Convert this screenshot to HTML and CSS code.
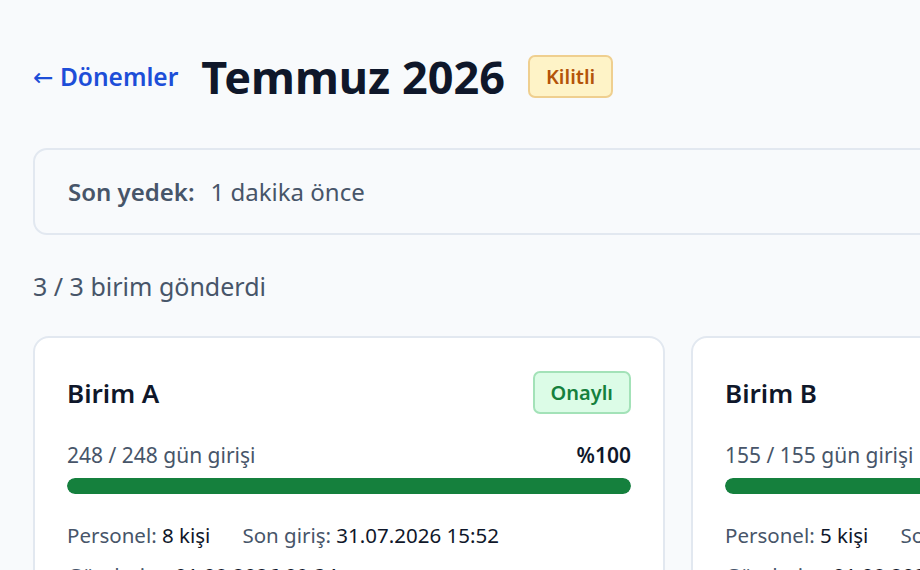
FILE: index.html
```html
<!DOCTYPE html>
<html lang="tr">
<head>
    <meta charset="UTF-8">
    <meta name="viewport" content="width=device-width, initial-scale=1.0">
    <title>Temmuz 2026</title>
    <link rel="stylesheet" href="styles.css">
</head>
<body>
    <div class="page">
        <div class="header">
            <a class="backLink" href="#"><span class="arrow">&larr;</span> Dönemler</a>
            <h1 class="title">Temmuz 2026</h1>
            <span class="badge badgeLocked">Kilitli</span>
        </div>

        <div class="backup">
            <span class="backupLabel">Son yedek:</span>
            <span class="backupValue">1 dakika önce</span>
        </div>

        <p class="summary">3 / 3 birim gönderdi</p>

        <div class="cards">
            <div class="card">
                <div class="cardHead">
                    <h2 class="cardTitle">Birim A</h2>
                    <span class="badge badgeOk">Onaylı</span>
                </div>
                <div class="progressInfo">
                    <span>248 / 248 gün girişi</span>
                    <span class="percent">%100</span>
                </div>
                <div class="track"><div class="fill" style="width: 100%"></div></div>
                <div class="meta">
                    <span><span class="metaLabel">Personel:</span> 8 kişi</span>
                    <span><span class="metaLabel">Son giriş:</span> 31.07.2026 15:52</span>
                </div>
                <div class="meta">
                    <span><span class="metaLabel">Gönderim:</span> 01.08.2026 09:34</span>
                </div>
            </div>
            <div class="card">
                <div class="cardHead">
                    <h2 class="cardTitle">Birim B</h2>
                    <span class="badge badgeOk">Onaylı</span>
                </div>
                <div class="progressInfo">
                    <span>155 / 155 gün girişi</span>
                    <span class="percent">%100</span>
                </div>
                <div class="track"><div class="fill" style="width: 100%"></div></div>
                <div class="meta">
                    <span><span class="metaLabel">Personel:</span> 5 kişi</span>
                    <span><span class="metaLabel">Son giriş:</span> 31.07.2026 14:10</span>
                </div>
                <div class="meta">
                    <span><span class="metaLabel">Gönderim:</span> 01.08.2026 09:21</span>
                </div>
            </div>
            <div class="card">
                <div class="cardHead">
                    <h2 class="cardTitle">Birim C</h2>
                    <span class="badge badgeOk">Onaylı</span>
                </div>
                <div class="progressInfo">
                    <span>186 / 186 gün girişi</span>
                    <span class="percent">%100</span>
                </div>
                <div class="track"><div class="fill" style="width: 100%"></div></div>
                <div class="meta">
                    <span><span class="metaLabel">Personel:</span> 6 kişi</span>
                    <span><span class="metaLabel">Son giriş:</span> 31.07.2026 16:05</span>
                </div>
                <div class="meta">
                    <span><span class="metaLabel">Gönderim:</span> 01.08.2026 10:02</span>
                </div>
            </div>
        </div>
    </div>
</body>
</html>
```

FILE: styles.css
```css
*{margin:0;padding:0;box-sizing:border-box;}
html{overflow:hidden;}
body{background:#f8fafc;font-family:"Noto Sans","Open Sans",sans-serif;color:#0f172a;}
.page{width:1981px;padding:46px 0 40px 33px;}

.header{display:flex;align-items:center;gap:23px;}
.backLink{color:#1d4ed8;text-decoration:none;font-size:24.5px;font-weight:600;}
.arrow{font-family:"DejaVu Sans",sans-serif;font-weight:400;}
.title{font-size:45px;font-weight:700;color:#0f172a;}
.badge{display:inline-block;border:2px solid;border-radius:7px;font-weight:600;font-size:20px;padding:6px 16px;}
.badgeLocked{background:#fef3c7;border-color:#efcf8f;color:#b45309;}
.badgeOk{background:#dcfce7;border-color:#a3e2b8;color:#15803d;}

.backup{margin-top:41px;height:87px;border:2px solid #e2e8f0;border-radius:14px;display:flex;align-items:center;gap:16px;padding:0 33px;font-size:24px;color:#475569;}
.backupLabel{font-weight:600;}

.summary{margin-top:34px;font-size:25px;color:#475569;}

.cards{margin-top:33px;display:grid;grid-template-columns:repeat(3,632px);gap:26px;}
.card{background:#fff;border:2px solid #e2e8f0;border-radius:16px;padding:33px 32px 28px;}
.cardHead{display:flex;justify-content:space-between;align-items:center;}
.cardTitle{font-size:26px;font-weight:600;}
.progressInfo{margin-top:27px;display:flex;justify-content:space-between;font-size:21px;color:#475569;}
.percent{color:#0f172a;font-weight:600;}
.track{margin-top:9px;height:16px;border-radius:8px;background:#e2e8f0;overflow:hidden;}
.fill{height:100%;background:#15803d;border-radius:8px;}
.meta{margin-top:27px;display:flex;gap:32px;font-size:20.5px;color:#0f172a;}
.meta + .meta{margin-top:12px;}
.metaLabel{color:#475569;}
```
